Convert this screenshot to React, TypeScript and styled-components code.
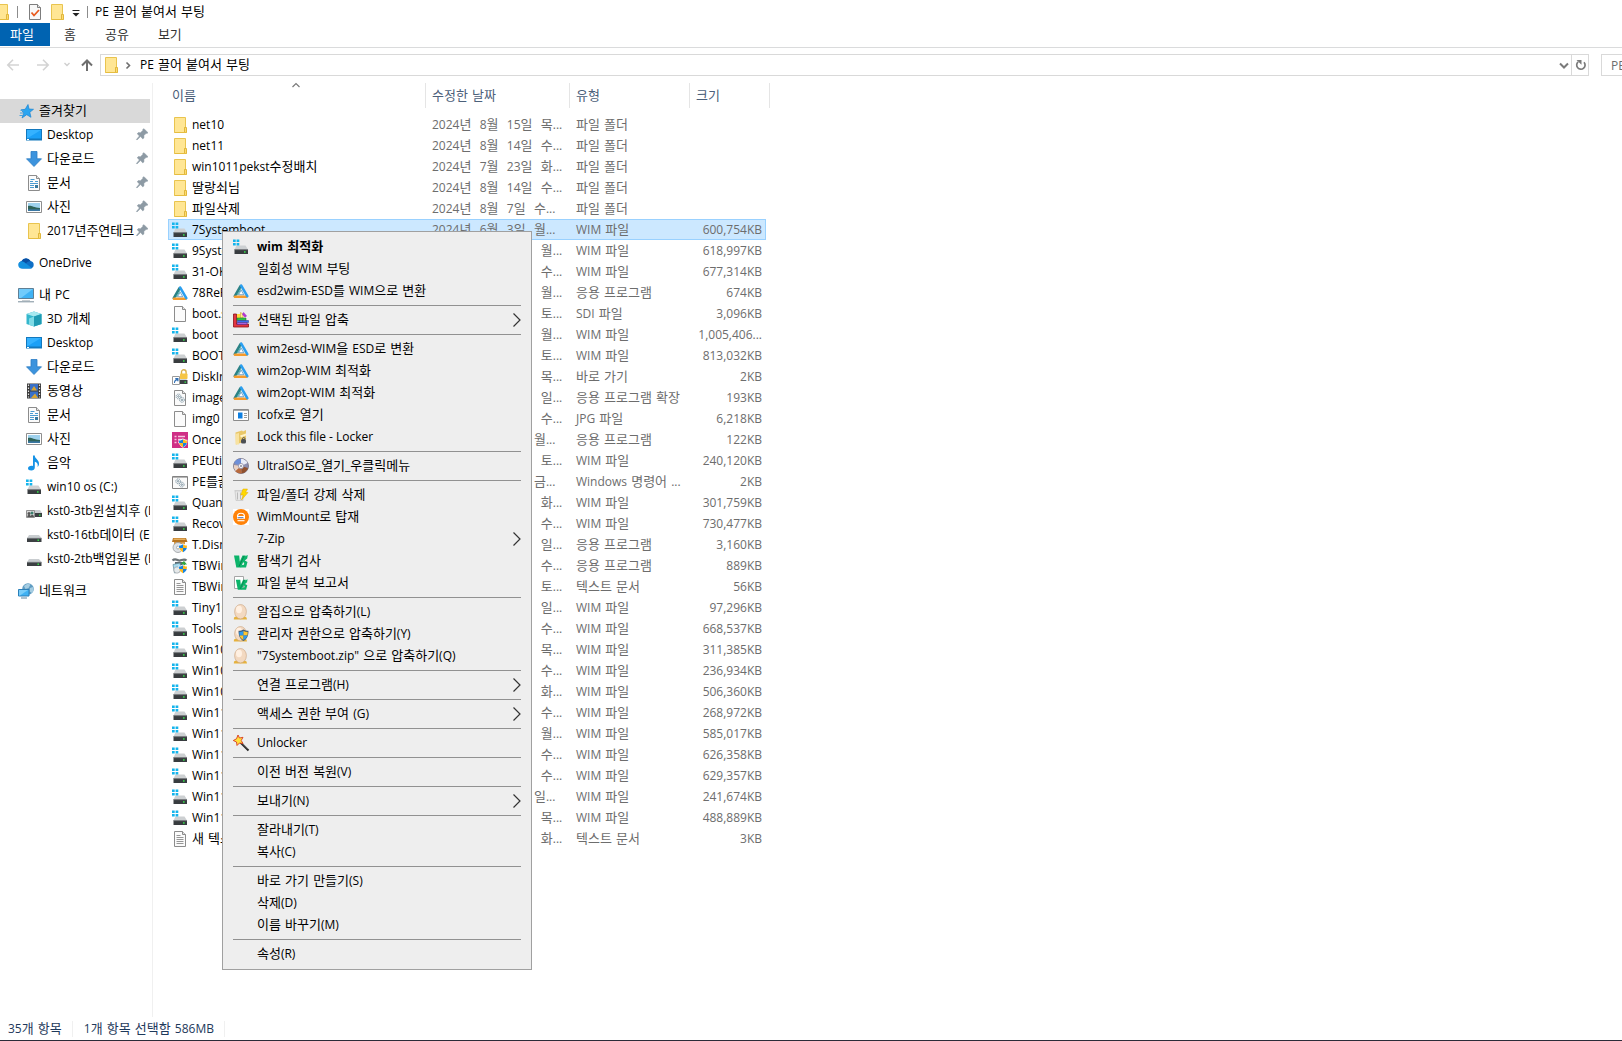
import React from "react";
import styled, { createGlobalStyle } from "styled-components";

const GlobalStyle = createGlobalStyle`
  * { box-sizing: border-box; }
  body {
    margin: 0;
    background: #ffffff;
    color: #000000;
    font-family: "Open Sans", "Noto Sans CJK KR", sans-serif;
    font-size: 12px;
    line-height: 16px;
    overflow: hidden;
  }
  button, input { font: inherit; color: inherit; }
`;

/* ---------- text ---------- */

const Run = styled.span`
  white-space: pre;
`;
const Hangul = styled.span`
  font-family: "DejaVu Sans", "Noto Sans CJK KR", sans-serif;
  font-size: 13px;
`;

/* Korean words, with the spaces round them, are set one size larger than the Latin ones. */
function Text({ children }: { children: string }) {
  const parts = children.split(/(\s*[\uAC00-\uD7A3]+\s*)/).filter(Boolean);
  return (
    <Run>
      {parts.map((p, i) =>
        /[\uAC00-\uD7A3]/.test(p) ? <Hangul key={i}>{p}</Hangul> : p
      )}
    </Run>
  );
}

/* ---------- icons ---------- */

const Svg = styled.svg`
  display: block;
  flex: none;
  width: 16px;
  height: 16px;
  overflow: visible;
`;

const Shield = () => (
  <g>
    <path d="M11 6.500c1.500 1 3 1.300 4.500 1.300 0 4-1.300 6.300-4.500 8-3.200-1.700-4.500-4-4.500-8 1.500 0 3-.3 4.500-1.300z" fill="#fff" />
    <path d="M11 7.200v3.900H7.200c-.1-.8-.2-1.600-.2-2.600 1.500 0 2.900-.4 4-1.300z" fill="#1583e0" />
    <path d="M11 7.200c1.100.9 2.500 1.300 4 1.300 0 1-.1 1.800-.2 2.600H11z" fill="#ffb91d" />
    <path d="M7.200 11.100H11v4.200c-2.200-1.100-3.300-2.400-3.800-4.200z" fill="#ffb91d" />
    <path d="M14.800 11.100H11v4.200c2.200-1.100 3.300-2.400 3.800-4.200z" fill="#1583e0" />
  </g>
);

const Disk = () => (
  <g>
    <path d="M3 8h10l2.500 3H1.200z" fill="#c9cdd0" />
    <path d="M1 11h14.500v4H1z" fill="#3c4043" />
    <path d="M1 10.800h14.500v.8H1z" fill="#8b9094" />
    <rect x="11.500" y="12.500" width="1.500" height="1.500" fill="#35e04a" />
  </g>
);

const Page = () => (
  <g>
    <path d="M2.500 .5h8l3 3v12h-11z" fill="#fbfbfb" stroke="#8c8c8c" />
    <path d="M10.500.5v3h3" fill="#e4e4e4" stroke="#8c8c8c" />
  </g>
);

const Egg = () => (
  <g>
    <path d="M1 13.500q1.500-1 2.500-1h7q1.500 0 3 1l.5 2H.8z" fill="#e6b23c" />
    <ellipse cx="7.500" cy="7.700" rx="5.900" ry="7.200" fill="#f3d9c1" stroke="#c9a27e" strokeWidth=".6" />
    <ellipse cx="6" cy="5.500" rx="3" ry="3.700" fill="#fff0e2" />
  </g>
);

const Vee = () => (
  <g>
    <path d="M1 2.500h5.200l.6 6L9.500 2.500h3.200L8 14.500H3.300z" fill="#0cb46a" />
    <path d="M10.500 4 14.800 2l-.6 3.500-2.400 2 2.700 1.500-1.500 5.500H7.500l1.200-2.500h2l.6-2-2.300-1.500z" fill="#0cb46a" />
    <path d="M6 13.500 11 3" stroke="#067a48" strokeWidth=".8" />
  </g>
);

const Gears = () => (
  <g fill="none" stroke="#8198a5" strokeWidth="1">
    <circle cx="6.500" cy="6.500" r="2.400" strokeDasharray="1.200 .6" />
    <circle cx="6.500" cy="6.500" r=".8" />
    <circle cx="10" cy="9.800" r="2.400" strokeDasharray="1.200 .6" />
    <circle cx="10" cy="9.800" r=".8" />
  </g>
);

const glyphs: Record<string, React.ReactNode> = {
  folder: (
    <g>
      <path d="M2.500.500h11v10h-1v5h-10z" fill="#ffe694" stroke="#e9c44f" />
      <path d="M12.500 10.500h2v5h-2z" fill="#ffdc70" stroke="#e0b73d" />
      <path d="M2.500 15.500h12" stroke="#e6bd40" />
    </g>
  ),
  wim: (
    <g>
      <path d="M3.500 6.500h9l2.500 4H1.500z" fill="#cdd0d2" />
      <path d="M1.500 10.300H15V15H1.500z" fill="#383c3f" />
      <path d="M1.500 10.300H15v.8H1.500z" fill="#85898c" />
      <path d="M0 .5h2.700v2.600H0zM3.600.5h2.700v2.600H3.600zM0 4h2.700v2.600H0zM3.600 4h2.700v2.600H3.600z" fill="#14b4ec" />
      <rect x="11" y="12.200" width="1.600" height="1.500" fill="#35e04a" />
    </g>
  ),
  disk: <Disk />,
  diskShared: (
    <g>
      <path d="M8 7h6l2 3H8z" fill="#c9cdd0" />
      <path d="M7 10h9v4H7z" fill="#3c4043" />
      <rect x="13" y="11.500" width="1.500" height="1.300" fill="#35e04a" />
      <path d="M.5 7.500h8v7h-8z" fill="#d9d9d9" stroke="#909090" />
      <circle cx="3" cy="10.500" r="1.500" fill="#555" />
      <circle cx="6" cy="10" r="1.500" fill="#3b7f6f" />
      <path d="M1.200 14c.3-3 3.400-3 3.700 0zM4.500 14c.3-3 3.300-3 3.500 0z" fill="#555" />
    </g>
  ),
  tri: (
    <g strokeLinejoin="round" transform="translate(0 .7)">
      <path d="M7.700 2.300 1.800 12.500" stroke="#2b8286" strokeWidth="2.600" strokeLinecap="round" />
      <path d="M2 13h11.500" stroke="#f59b2c" strokeWidth="2.600" strokeLinecap="round" />
      <path d="M8.200 2 14.300 12.500" stroke="#2b9ff0" strokeWidth="2.600" strokeLinecap="round" />
      <path d="M7.800 5.500 4.200 11.500" stroke="#4cb1a7" strokeWidth="1" />
      <path d="M8.200 6.500 5.500 11h5.300z" fill="#fff" stroke="#2476b0" strokeWidth=".6" />
    </g>
  ),
  page: <Page />,
  text: (
    <g>
      <Page />
      <path d="M4.500 4.500h4M4.500 6.500h7M4.500 8.500h7M4.500 10.500h7M4.500 12.500h7" stroke="#969696" />
    </g>
  ),
  dll: (
    <g>
      <Page />
      <Gears />
    </g>
  ),
  cmd: (
    <g>
      <path d="M.5 2.500h15v12H.5z" fill="#fafafa" stroke="#838383" />
      <path d="M1 3.500h14" stroke="#b5b5b5" />
      <g transform="translate(-.3 .8)"><Gears /></g>
    </g>
  ),
  lock: (
    <g>
      <path d="M5 8h8l2 3H4z" fill="#cfd2d4" />
      <path d="M4 11h11.500v4H4z" fill="#3c4043" />
      <rect x="12.500" y="12.500" width="1.500" height="1.300" fill="#35e04a" />
      <path d="M9.500 5V3a2.300 2.300 0 0 1 4.600 0v2" fill="none" stroke="#d9b14a" strokeWidth="1.400" />
      <rect x="8" y="4.500" width="7.500" height="5.500" rx=".8" fill="#f6c544" />
      <path d="M.5 7.500h7v8h-7z" fill="#fff" stroke="#9a9a9a" />
      <path d="M2 14c0-2.500 1-3.700 2.800-3.700H3.300V9H6.500v3.300H5.200v-1C3.700 11.700 3 12.500 3 14z" fill="#2f6fb5" />
    </g>
  ),
  pink: (
    <g>
      <rect width="16" height="16" fill="#cf2f86" />
      <path d="M2.500 4.500h2M6 4.500h7M2.500 7.500h2M6 7.500h5M2.500 10.500h2M6 10.500h2" stroke="#f6c3de" strokeWidth="1.500" />
      <Shield />
    </g>
  ),
  box: (
    <g>
      <path d="M1 1h13l1.500 4H0z" fill="#b7741f" />
      <path d="M1.500 1.500h12v1.500h-12z" fill="#e6ae5c" />
      <path d="M2 5h11v6H2z" fill="#d99943" />
      <circle cx="6" cy="10.500" r="5" fill="#dfe2e5" stroke="#8d9297" strokeWidth=".7" />
      <circle cx="6" cy="10.500" r="1.500" fill="#fff" stroke="#8d9297" strokeWidth=".7" />
      <Shield />
    </g>
  ),
  tool: (
    <g>
      <path d="M.5 2.500C3 0 5 2 7 2.500S12 0 14.500 2.500" fill="none" stroke="#6b7377" strokeWidth="2.200" />
      <path d="M3 4h9v4H3z" fill="#5d6b70" />
      <path d="M1 6.500 8 5l1.500 8-7 2z" fill="#a9dcee" stroke="#5f8796" strokeWidth=".7" />
      <circle cx="5" cy="12" r="3.200" fill="#e5e9eb" stroke="#8d9297" strokeWidth=".6" />
      <path d="M9 5.500 12 3l3 3.500h-2V9h-2V6.500z" fill="#35a543" />
      <Shield />
    </g>
  ),
  star: (
    <g>
      <path d="M10 1.500 11 6l4.500.3-3.700 3 1.200 5-4.300-2.600L4 15l1.800-5L3 6.800l4.200-.5z" fill="#2aa5f0" stroke="#1b84d1" strokeWidth=".7" />
      <path d="M2.500 7.500h3M2 10h3.500M1.500 12.500H5" stroke="#4aa3dd" />
    </g>
  ),
  desktop: (
    <g>
      <path d="M0 2h16v11.500H0z" fill="#1378bd" />
      <path d="M1 3h14v8.500H1z" fill="#1ba0f7" />
      <path d="M1 3h14L1 11.500z" fill="#35b2ff" />
      <path d="M1 12.500h2" stroke="#fff" />
    </g>
  ),
  down: <path d="M5 .5h6v7.300h4.500L8 15.500.5 7.800H5z" fill="#3c93dd" stroke="#2b7cc4" strokeWidth=".8" />,
  doc: (
    <g>
      <Page />
      <path d="M4.500 4.500h4M4 6.500h3M9 6.500h3M4 8.500h8M4 10.500h4M4 12.500h4" stroke="#4a9bd1" />
      <path d="M9 10h3v3H9z" fill="#39799f" />
    </g>
  ),
  photo: (
    <g>
      <path d="M.5 2.500h15v11H.5z" fill="#fff" stroke="#8e8e8e" />
      <path d="M2 4h12v8H2z" fill="#9fd2ee" />
      <path d="M2 7c3-1 5 1.500 12 2v3H2z" fill="#2f6358" />
      <path d="M2 10.300h12V12H2z" fill="#3b78a4" />
    </g>
  ),
  cloud: (
    <g>
      <path d="M5 13.500a5 4 0 0 1-1.500-7.500A5 5 0 0 1 12.500 6a3.800 3.800 0 0 1 0 7.500z" fill="#0f6fc6" />
      <path d="M3.500 13.500A3.500 3.500 0 0 1 3 6.600c2-.6 4 .5 5 2l6 4.600c-.5.300-1 .3-1.500.3z" fill="#1490df" />
      <path d="M3.600 6.300a5 5 0 0 1 8.900-.3c-2 0-3.500 1.200-4.500 2.500C6.500 6.800 5 6.300 3.600 6.300z" fill="#0a4fa3" />
    </g>
  ),
  pc: (
    <g>
      <path d="M.5 1.500h15v10H.5z" fill="#3fb2f4" stroke="#5f7f95" />
      <path d="M1 2h14L3 11H1z" fill="#71cbfb" />
      <path d="M4 13.500h8" stroke="#c8ced2" />
      <path d="M0 14.800h16" stroke="#7a8e9b" />
    </g>
  ),
  cube: (
    <g>
      <path d="M8 .5 15.500 3v10L8 15.500.5 13V3z" fill="#35b7cd" />
      <path d="M8 .5 15.500 3 8 5.500.5 3z" fill="#a7e9f0" />
      <path d="M8 5.500 15.500 3v10L8 15.500z" fill="#1f9bb3" />
      <path d="M3 7.500 8 5.500v10l-5-1.700z" fill="#7fdbe6" />
    </g>
  ),
  film: (
    <g>
      <path d="M1 .5h14v15H1z" fill="#3b3b3b" />
      <path d="M4 1h8v6.500H4z" fill="#3970c8" />
      <path d="M4 8.500h8V15H4z" fill="#3970c8" />
      <path d="M5 7.500 8 3l3 4.500zM5 15l4-4.500 3 4.500z" fill="#d7a534" />
      <path d="M2.500 1.500v13M13.500 1.500v13" stroke="#e8e8e8" strokeWidth="1.200" strokeDasharray="1.500 1.500" />
    </g>
  ),
  music: (
    <path d="M7 .5h1.800c0 3.500 4.700 4 4.200 9-.3 1.300-.8 2-1.500 2.500 1-3.500-1-5-2.700-5.300v5.800c0 1.700-1.500 3-3.500 3S2 14.500 2 13.200s1.500-2.500 3.500-2.500c.5 0 1 .1 1.500.3z" fill="#1592e6" />
  ),
  network: (
    <g>
      <circle cx="10" cy="6" r="5.800" fill="#5f9cc2" />
      <path d="M6 3c2-2.500 5-2.500 6.500-1.500L10.500 5 7.500 6zM12 5l3-1c.8 2 .5 4.500-1 6l-2.500-1.500z" fill="#a6cde2" />
      <path d="M.5 6.500h10.500v6.500H.5z" fill="#3fb2f4" stroke="#2b7fb8" />
      <path d="M1 7h9L2 12.500H1z" fill="#79cdfa" />
      <path d="M3 15h6" stroke="#5d84a0" />
    </g>
  ),
  pin: (
    <path d="M10.800 2.500 14 5.700l-1 .8-.8-.2-2.300 2.300.1 2.200-1.200 1.100-2.300-2.300L3 13l-.6-.5 3-3.600-2.200-2.100L4.300 5.600l2.200.1 2.400-2.400-.2-.8 1-.8z" fill="#8d9aa4" stroke="#8d9aa4" strokeWidth=".5" />
  ),
  books: (
    <g>
      <path d="M.5 2h3v10h12v3H.5z" fill="#e23540" stroke="#8a1218" strokeWidth=".8" />
      <path d="M4 2h3v5H4z" fill="#ffd93a" />
      <path d="M7.500.5 10 2v4H7.500z" fill="#fff08a" stroke="#b79200" strokeWidth=".5" />
      <path d="M10.500 0 14 4l-2 1.500-3-3z" fill="#b03bd0" />
      <path d="M4 6h9v2.300H4z" fill="#31c948" stroke="#13691f" strokeWidth=".5" />
      <path d="M4.500 8.500h11v2h-11z" fill="#3c6dec" stroke="#172e80" strokeWidth=".5" />
      <path d="M4 10.700h10v1.800H4z" fill="#b26bea" stroke="#4c1a74" strokeWidth=".5" />
    </g>
  ),
  icofx: (
    <g>
      <path d="M.5 2.500h15v11H.5z" fill="#fff" stroke="#8b8b8b" />
      <path d="M1 3.500h14" stroke="#a8a8a8" />
      <path d="M5 5.500h4.500v6H5z" fill="#0f7fe0" />
      <path d="M11 6.500h3M11 8.500h3M11 10.500h3" stroke="#9b9b9b" />
    </g>
  ),
  locker: (
    <g>
      <path d="M2.500 3.500 9 1.500l1 1 3-1.500v11L3 15.500z" fill="#e9c768" />
      <path d="M2.500 5 6 4v11.500H2.500z" fill="#f8e2a0" />
      <path d="M7 6.500 13 4.500v2L8 8.500z" fill="#fff3c8" />
      <rect x="8" y="10" width="5" height="4.500" rx="1.500" fill="#4b4f53" />
      <path d="M9.500 10c0-2 2.500-2 2.500 0" fill="none" stroke="#4b4f53" />
    </g>
  ),
  disc: (
    <g>
      <circle cx="8" cy="8" r="7.500" fill="#8d8fb0" stroke="#6e6a7c" strokeWidth=".8" />
      <path d="M8 8 1 5A7.500 7.500 0 0 1 8 .7z" fill="#6e8fd8" />
      <path d="M8 8V.7A7.500 7.500 0 0 1 14.500 5z" fill="#e8ecf8" />
      <path d="M8 8 2 13A7.500 7.500 0 0 0 9 15.300z" fill="#b96a3c" />
      <path d="M8 8 9 15.300A7.500 7.500 0 0 0 15 10z" fill="#91512d" />
      <path d="M8 8 .8 7A8 8 0 0 0 2.500 13z" fill="#e9d1c2" />
      <circle cx="8" cy="8" r="2.600" fill="#f2f2f5" stroke="#8a86a0" strokeWidth=".7" />
      <circle cx="8" cy="8" r="1" fill="#8b8b99" />
    </g>
  ),
  force: (
    <g>
      <path d="M2 4h8v9.500H3z" fill="#e8e8e8" stroke="#c4c4c4" strokeWidth=".7" />
      <path d="M4.500 5.500v7M7.500 5.500v7" stroke="#b9b9b9" />
      <path d="M1.500 3.500h9" stroke="#cfcfcf" />
      <path d="M10 2h4.500l-2 3.500H15L8.500 13l1.800-5H7.800z" fill="#ffd900" stroke="#e2a900" strokeWidth=".5" />
    </g>
  ),
  mount: (
    <g>
      <rect width="16" height="16" fill="#fff" />
      <circle cx="8" cy="8" r="8" fill="#ff8208" />
      <path d="M4.500 7c.3-2.300 1.800-2.800 3.500-2.800s3.200.5 3.500 2.800" fill="none" stroke="#fff" strokeWidth="1.100" />
      <path d="M4 7h8v2.800H4z" fill="#fff" />
      <path d="M4.800 8l.7 1.200.8-1.200.8 1.200.9-1.200.8 1.200.8-1.200.8 1.200" fill="none" stroke="#2d56a0" strokeWidth=".7" />
      <path d="M4.500 11.700h7" stroke="#fff" strokeWidth="1.100" />
    </g>
  ),
  vee: <Vee />,
  veePage: (
    <g>
      <path d="M1.500 1.500h9v12h-9z" fill="#fff" stroke="#a6a6a6" />
      <g transform="translate(2 2.500) scale(.85)"><Vee /></g>
    </g>
  ),
  egg: <Egg />,
  eggShield: (
    <g>
      <Egg />
      <path d="M10.500 3.500c1.500 1 3 1.300 5 1.300 0 5-1.500 8.200-5 10.200-3.500-2-5-5.200-5-10.200 2 0 3.500-.3 5-1.300z" fill="#46607a" />
      <path d="M10.500 5v4.500H6.600C6.400 8.500 6.300 7 6.300 6c1.600 0 3-.3 4.200-1z" fill="#2d9bf0" />
      <path d="M10.500 5c1.200.7 2.600 1 4.200 1 0 1-.1 2.500-.3 3.500h-3.900z" fill="#ffc62e" />
      <path d="M6.600 9.500h3.900V14c-2.300-1.300-3.300-2.700-3.900-4.500z" fill="#ffc62e" />
      <path d="M14.400 9.500h-3.900V14c2.300-1.300 3.300-2.700 3.900-4.500z" fill="#2d9bf0" />
    </g>
  ),
  wand: (
    <g>
      <path d="M7.500 7.500 15.500 15.500" stroke="#222" strokeWidth="2" />
      <path d="M8 7.300 15 14.300" stroke="#999" strokeWidth=".6" />
      <path d="M5 0 6.500 3l3.500-.7L8.200 5.500 10 8.500 6.500 8 4 10.500 3.500 7 .3 5.500l3.200-1.700z" fill="#ffe13a" stroke="#d93a1e" strokeWidth=".9" />
    </g>
  ),
  check: (
    <g>
      <path d="M2.500.5h8l3 3v12h-11z" fill="#f8f8f8" stroke="#7d7d7d" />
      <path d="M10.500.5v3h3" fill="#e4e4e4" stroke="#7d7d7d" />
      <path d="m4.500 8.500 2.500 3 5-5.500" fill="none" stroke="#e8591c" strokeWidth="1.800" />
    </g>
  ),
  menuCaret: (
    <g>
      <path d="M4.500 6.500h7" stroke="#222" />
      <path d="M4.500 9h7L8 12.500z" fill="#222" />
    </g>
  ),
  back: <path d="M14 8H3M8 2.800 2.800 8 8 13.200" fill="none" stroke="#d3d3d3" strokeWidth="1.600" />,
  forward: <path d="M2 8h11M8 2.800 13.200 8 8 13.200" fill="none" stroke="#d3d3d3" strokeWidth="1.600" />,
  history: <path d="m5.500 6 2.500 2.500L10.500 6" fill="none" stroke="#cfcfcf" strokeWidth="1.400" />,
  up: <path d="M8 14V3.500M3 8.500l5-5 5 5" fill="none" stroke="#6e6e6e" strokeWidth="2" />,
  crumb: <path d="m7.500 5.500 3 3-3 3" fill="none" stroke="#6e6e6e" strokeWidth="1.600" />,
  drop: <path d="m5 6.500 4 4 4-4" fill="none" stroke="#7a7a7a" strokeWidth="2" />,
  refresh: (
    <g>
      <path d="M6.200 4.800A4.200 4.200 0 1 0 12 5.200" fill="none" stroke="#7a7a7a" strokeWidth="1.700" />
      <path d="M4.500 3h5v4.800z" fill="#7a7a7a" />
    </g>
  ),
  sort: <path d="m4.500 10 3.500-3.500 3.500 3.500" fill="none" stroke="#7a7a7a" strokeWidth="1.200" />,
  sub: <path d="m8.500 1.500 6.500 6.500-6.500 6.500" fill="none" stroke="#333" strokeWidth="1.200" />,
};

const Icon = ({ name }: { name: string }) => (
  <Svg viewBox="0 0 16 16" aria-hidden="true">{glyphs[name]}</Svg>
);

/* ---------- window frame ---------- */

const Window = styled.div`
  display: flex;
  flex-direction: column;
  height: 100vh;
  border-bottom: 1px solid #2b2b38;
  overflow: hidden;
`;
const TitleBar = styled.header`
  display: flex;
  align-items: center;
  height: 23px;
`;
const TitleTools = styled.div`
  display: flex;
  align-items: center;
  margin-left: -6px;
`;
const ToolButton = styled.button<{ $gap?: number }>`
  display: flex;
  padding: 0;
  margin-left: ${(p) => p.$gap ?? 0}px;
  border: 0;
  background: none;
`;
const TitleRule = styled.span<{ $gap?: number }>`
  width: 1px;
  height: 12px;
  margin-left: ${(p) => p.$gap ?? 0}px;
  background: #8c8c8c;
`;
const Title = styled.h1`
  margin: 0 0 0 7px;
  font-size: 12px;
  font-weight: 400;
  line-height: 16px;
`;
const Tabs = styled.nav`
  display: flex;
  height: 25px;
  padding-bottom: 1px;
  border-bottom: 1px solid #dadbdc;
`;
const Tab = styled.button<{ $file?: boolean }>`
  min-width: ${(p) => (p.$file ? 50 : 0)}px;
  padding: 0 15px 0 ${(p) => (p.$file ? 10 : 14)}px;
  border: 0;
  text-align: left;
  background: ${(p) => (p.$file ? "#0063b1" : "none")};
  color: ${(p) => (p.$file ? "#ffffff" : "#333333")};
`;
const AddressRow = styled.div`
  display: flex;
  align-items: center;
  height: 35px;
  padding: 6px 0 7px;
`;
const NavButton = styled.button<{ $width: number }>`
  display: flex;
  flex: none;
  justify-content: center;
  width: ${(p) => p.$width}px;
  padding: 0;
  border: 0;
  background: none;
`;
const Address = styled.div`
  display: flex;
  flex: 1;
  align-items: center;
  height: 22px;
  padding-left: 2px;
  border: 1px solid #d9d9d9;
`;
const Crumb = styled.button`
  flex: 1;
  padding: 0 0 0 5px;
  border: 0;
  background: none;
  text-align: left;
`;
const Refresh = styled.button`
  display: flex;
  width: 17px;
  height: 20px;
  padding: 0;
  align-items: center;
  justify-content: center;
  border: 0;
  border-left: 1px solid #d9d9d9;
  background: none;
`;
const Search = styled.input`
  flex: none;
  width: 21px;
  height: 22px;
  margin-left: 12px;
  padding: 0 0 0 9px;
  border: 1px solid #d9d9d9;
  border-right: 0;
  border-radius: 0;
  outline: 0;
  color: #6d6d6d;
`;
const Body = styled.div`
  display: flex;
  flex: 1;
  min-height: 0;
`;

/* ---------- navigation pane ---------- */

const Side = styled.nav`
  flex: none;
  width: 153px;
  padding: 16px 2px 0 0;
  border-right: 1px solid #f0f0f0;
`;
const Group = styled.div`
  margin-bottom: 8px;
`;
const SideLink = styled.a<{ $child?: boolean; $active?: boolean }>`
  display: flex;
  align-items: center;
  height: 24px;
  padding-left: ${(p) => (p.$child ? 26 : 18)}px;
  overflow: hidden;
  background: ${(p) => (p.$active ? "#d9d9d9" : "transparent")};
  color: #000000;
  text-decoration: none;
`;
const SideLabel = styled.span`
  flex: 1;
  min-width: 0;
  margin-left: 5px;
  overflow: hidden;
  white-space: nowrap;
`;

/* ---------- file list ---------- */

const Main = styled.main`
  position: relative;
  flex: 1;
  min-width: 0;
  padding-left: 15px;
`;
const Files = styled.table`
  width: 602px;
  table-layout: fixed;
  border-collapse: separate;
  border-spacing: 0;
`;
const Head = styled.th`
  position: relative;
  height: 25px;
  padding: 0 6px;
  border-right: 1px solid #e5e5e5;
  color: #4c607a;
  font-weight: 400;
  text-align: left;
  &:first-child { padding-left: 4px; }
`;
const SortMark = styled.span`
  position: absolute;
  top: -6px;
  left: 50%;
  margin-left: -9px;
`;
const Spacer = styled.td`
  height: 6px;
  padding: 0;
`;
const Cell = styled.td<{ $right?: boolean }>`
  height: 21px;
  padding: 0 ${(p) => (p.$right ? 4 : 0)}px 0 6px;
  color: #6d6d6d;
  text-align: ${(p) => (p.$right ? "right" : "left")};
  white-space: nowrap;
  &:first-child { padding-left: 4px; color: #000000; }
`;
const Row = styled.tr<{ $selected?: boolean }>`
  ${(p) =>
    p.$selected &&
    `
    ${Cell} {
      background: #cce8ff;
      box-shadow: inset 0 1px #99d1ff, inset 0 -1px #99d1ff;
    }
    ${Cell}:first-child { box-shadow: inset 1px 1px #99d1ff, inset 0 -1px #99d1ff; }
    ${Cell}:nth-child(4) { box-shadow: inset -1px 1px #99d1ff, inset 0 -1px #99d1ff; }
  `}
`;
const Name = styled.span`
  display: flex;
  align-items: center;
  gap: 4px;
`;

/* ---------- context menu ---------- */

const Menu = styled.div`
  position: absolute;
  top: 148px;
  left: 69px;
  width: 310px;
  padding: 4px 10px;
  border: 1px solid #a0a0a0;
  background: #eeeeee;
`;
const MenuItem = styled.button<{ $strong?: boolean }>`
  display: flex;
  align-items: center;
  width: 100%;
  height: 22px;
  padding: 0;
  border: 0;
  background: none;
  font-weight: ${(p) => (p.$strong ? 700 : 400)};
  text-align: left;
`;
const MenuIcon = styled.span`
  flex: none;
  width: 24px;
`;
const MenuLabel = styled.span`
  flex: 1;
`;
const MenuRule = styled.hr`
  height: 1px;
  margin: 3px 0;
  border: 0;
  background: #919191;
`;

const Status = styled.footer`
  display: flex;
  align-items: center;
  height: 23px;
  padding-left: 8px;
  color: #1e395b;
`;
const StatusPart = styled.span`
  height: 16px;
  padding-right: 10px;
  margin-right: 11px;
  border-right: 1px solid #f0f0f0;
`;

/* ---------- data ---------- */

type Link = [icon: string, label: string];
const favourites: Link[] = [
  ["desktop", "Desktop"],
  ["down", "다운로드"],
  ["doc", "문서"],
  ["photo", "사진"],
  ["folder", "2017년주연테크"],
];
const computer: Link[] = [
  ["cube", "3D 개체"],
  ["desktop", "Desktop"],
  ["down", "다운로드"],
  ["film", "동영상"],
  ["doc", "문서"],
  ["photo", "사진"],
  ["music", "음악"],
  ["wim", "win10 os (C:)"],
  ["diskShared", "kst0-3tb윈설치후 (D:)"],
  ["disk", "kst0-16tb데이터 (E:)"],
  ["disk", "kst0-2tb백업원본 (F:)"],
];

type File = [icon: string, name: string, date: string, type: string, size: string];
const W = "WIM 파일";
const APP = "응용 프로그램";
const DIR = "파일 폴더";
const files: File[] = [
  ["folder", "net10", "8월  15일  목", DIR, ""],
  ["folder", "net11", "8월  14일  수", DIR, ""],
  ["folder", "win1011pekst수정배치", "7월  23일  화", DIR, ""],
  ["folder", "딸랑쇠님", "8월  14일  수", DIR, ""],
  ["folder", "파일삭제", "8월  7일  수", DIR, ""],
  ["wim", "7Systemboot", "6월  3일  월", W, "600,754KB"],
  ["wim", "9System", "6월  10일  월", W, "618,997KB"],
  ["wim", "31-OK", "6월  12일  수", W, "677,314KB"],
  ["tri", "78ReP", "6월  17일  월", APP, "674KB"],
  ["page", "boot.sdi", "6월  15일  토", "SDI 파일", "3,096KB"],
  ["wim", "boot", "6월  17일  월", W, "1,005,406..."],
  ["wim", "BOOT", "6월  15일  토", W, "813,032KB"],
  ["lock", "DiskIn", "6월  13일  목", "바로 가기", "2KB"],
  ["dll", "image", "6월  16일  일", "응용 프로그램 확장", "193KB"],
  ["page", "img0", "6월  12일  수", "JPG 파일", "6,218KB"],
  ["pink", "OnceP", "6월  3일  월", APP, "122KB"],
  ["wim", "PEUtil", "6월  15일  토", W, "240,120KB"],
  ["cmd", "PE를끌", "6월  7일  금", "Windows 명령어 ...", "2KB"],
  ["wim", "Quant", "6월  18일  화", W, "301,759KB"],
  ["wim", "Recov", "6월  12일  수", W, "730,477KB"],
  ["box", "T.Dism", "6월  16일  일", APP, "3,160KB"],
  ["tool", "TBWin", "6월  12일  수", APP, "889KB"],
  ["text", "TBWin", "6월  15일  토", "텍스트 문서", "56KB"],
  ["wim", "Tiny10", "6월  16일  일", W, "97,296KB"],
  ["wim", "ToolsP", "6월  12일  수", W, "668,537KB"],
  ["wim", "Win10", "6월  13일  목", W, "311,385KB"],
  ["wim", "Win10", "6월  12일  수", W, "236,934KB"],
  ["wim", "Win10", "6월  18일  화", W, "506,360KB"],
  ["wim", "Win11", "6월  12일  수", W, "268,972KB"],
  ["wim", "Win11", "6월  17일  월", W, "585,017KB"],
  ["wim", "Win11", "6월  12일  수", W, "626,358KB"],
  ["wim", "Win11", "6월  12일  수", W, "629,357KB"],
  ["wim", "Win11", "6월  9일  일", W, "241,674KB"],
  ["wim", "Win11", "6월  13일  목", W, "488,889KB"],
  ["text", "새 텍스", "6월  18일  화", "텍스트 문서", "3KB"],
];

type Entry = { label: string; icon?: string; sub?: boolean; strong?: boolean };
const menu: Entry[][] = [
  [
    { icon: "wim", label: "wim 최적화", strong: true },
    { label: "일회성 WIM 부팅" },
    { icon: "tri", label: "esd2wim-ESD를 WIM으로 변환" },
  ],
  [{ icon: "books", label: "선택된 파일 압축", sub: true }],
  [
    { icon: "tri", label: "wim2esd-WIM을 ESD로 변환" },
    { icon: "tri", label: "wim2op-WIM 최적화" },
    { icon: "tri", label: "wim2opt-WIM 최적화" },
    { icon: "icofx", label: "Icofx로 열기" },
    { icon: "locker", label: "Lock this file - Locker" },
  ],
  [{ icon: "disc", label: "UltraISO로_열기_우클릭메뉴" }],
  [
    { icon: "force", label: "파일/폴더 강제 삭제" },
    { icon: "mount", label: "WimMount로 탑재" },
    { label: "7-Zip", sub: true },
    { icon: "vee", label: "탐색기 검사" },
    { icon: "veePage", label: "파일 분석 보고서" },
  ],
  [
    { icon: "egg", label: "알집으로 압축하기(L)" },
    { icon: "eggShield", label: "관리자 권한으로 압축하기(Y)" },
    { icon: "egg", label: '"7Systemboot.zip" 으로 압축하기(Q)' },
  ],
  [{ label: "연결 프로그램(H)", sub: true }],
  [{ label: "액세스 권한 부여 (G)", sub: true }],
  [{ icon: "wand", label: "Unlocker" }],
  [{ label: "이전 버전 복원(V)" }],
  [{ label: "보내기(N)", sub: true }],
  [{ label: "잘라내기(T)" }, { label: "복사(C)" }],
  [{ label: "바로 가기 만들기(S)" }, { label: "삭제(D)" }, { label: "이름 바꾸기(M)" }],
  [{ label: "속성(R)" }],
];

/* ---------- parts ---------- */

function SideItem(p: { icon: string; label: string; child?: boolean; active?: boolean; pinned?: boolean }) {
  return (
    <SideLink href="#" $child={p.child} $active={p.active}>
      <Icon name={p.icon} />
      <SideLabel><Text>{p.label}</Text></SideLabel>
      {p.pinned && <Icon name="pin" />}
    </SideLink>
  );
}

function FileTable() {
  return (
    <Files>
      <colgroup>
        <col style={{ width: 258 }} />
        <col style={{ width: 144 }} />
        <col style={{ width: 120 }} />
        <col style={{ width: 76 }} />
        <col style={{ width: 4 }} />
      </colgroup>
      <thead>
        <tr>
          <Head>
            <Text>이름</Text>
            <SortMark><Icon name="sort" /></SortMark>
          </Head>
          <Head><Text>수정한 날짜</Text></Head>
          <Head><Text>유형</Text></Head>
          <Head colSpan={2}><Text>크기</Text></Head>
        </tr>
      </thead>
      <tbody>
        <tr><Spacer colSpan={5} /></tr>
        {files.map(([icon, name, date, type, size], i) => (
          <Row key={i} $selected={name === "7Systemboot"}>
            <Cell><Name><Icon name={icon} /><Text>{name}</Text></Name></Cell>
            <Cell><Text>{`2024년  ${date}...`}</Text></Cell>
            <Cell><Text>{type}</Text></Cell>
            <Cell $right><Text>{size}</Text></Cell>
          </Row>
        ))}
      </tbody>
    </Files>
  );
}

function ContextMenu() {
  return (
    <Menu role="menu">
      {menu.map((group, g) => (
        <React.Fragment key={g}>
          {g > 0 && <MenuRule />}
          {group.map((item) => (
            <MenuItem key={item.label} role="menuitem" $strong={item.strong}>
              <MenuIcon>{item.icon && <Icon name={item.icon} />}</MenuIcon>
              <MenuLabel><Text>{item.label}</Text></MenuLabel>
              {item.sub && <Icon name="sub" />}
            </MenuItem>
          ))}
        </React.Fragment>
      ))}
    </Menu>
  );
}

export default function App() {
  return (
    <>
      <GlobalStyle />
      <Window>
        <TitleBar>
          <TitleTools>
            <Icon name="folder" />
            <TitleRule $gap={7} />
            <ToolButton $gap={9} aria-label="속성"><Icon name="check" /></ToolButton>
            <ToolButton $gap={6} aria-label="새 폴더"><Icon name="folder" /></ToolButton>
            <ToolButton $gap={3} aria-label="사용자 지정"><Icon name="menuCaret" /></ToolButton>
            <TitleRule $gap={3} />
          </TitleTools>
          <Title><Text>PE 끌어 붙여서 부팅</Text></Title>
        </TitleBar>
        <Tabs>
          <Tab $file><Text>파일</Text></Tab>
          <Tab><Text>홈</Text></Tab>
          <Tab><Text>공유</Text></Tab>
          <Tab><Text>보기</Text></Tab>
        </Tabs>
        <AddressRow>
          <NavButton $width={26} aria-label="뒤로"><Icon name="back" /></NavButton>
          <NavButton $width={34} aria-label="앞으로"><Icon name="forward" /></NavButton>
          <NavButton $width={13} aria-label="최근 위치"><Icon name="history" /></NavButton>
          <NavButton $width={27} aria-label="위로"><Icon name="up" /></NavButton>
          <Address>
            <Icon name="folder" />
            <ToolButton aria-label="경로"><Icon name="crumb" /></ToolButton>
            <Crumb><Text>PE 끌어 붙여서 부팅</Text></Crumb>
            <ToolButton aria-label="이전 위치"><Icon name="drop" /></ToolButton>
            <Refresh aria-label="새로 고침"><Icon name="refresh" /></Refresh>
          </Address>
          <Search aria-label="검색" defaultValue="PE" />
        </AddressRow>
        <Body>
          <Side>
            <Group>
              <SideItem icon="star" label="즐겨찾기" active />
              {favourites.map(([icon, label]) => (
                <SideItem key={label} icon={icon} label={label} child pinned />
              ))}
            </Group>
            <Group><SideItem icon="cloud" label="OneDrive" /></Group>
            <Group>
              <SideItem icon="pc" label="내 PC" />
              {computer.map(([icon, label]) => (
                <SideItem key={label} icon={icon} label={label} child />
              ))}
            </Group>
            <Group><SideItem icon="network" label="네트워크" /></Group>
          </Side>
          <Main>
            <FileTable />
            <ContextMenu />
          </Main>
        </Body>
        <Status>
          <StatusPart><Text>35개 항목</Text></StatusPart>
          <StatusPart><Text>1개 항목 선택함 586MB</Text></StatusPart>
        </Status>
      </Window>
    </>
  );
}
